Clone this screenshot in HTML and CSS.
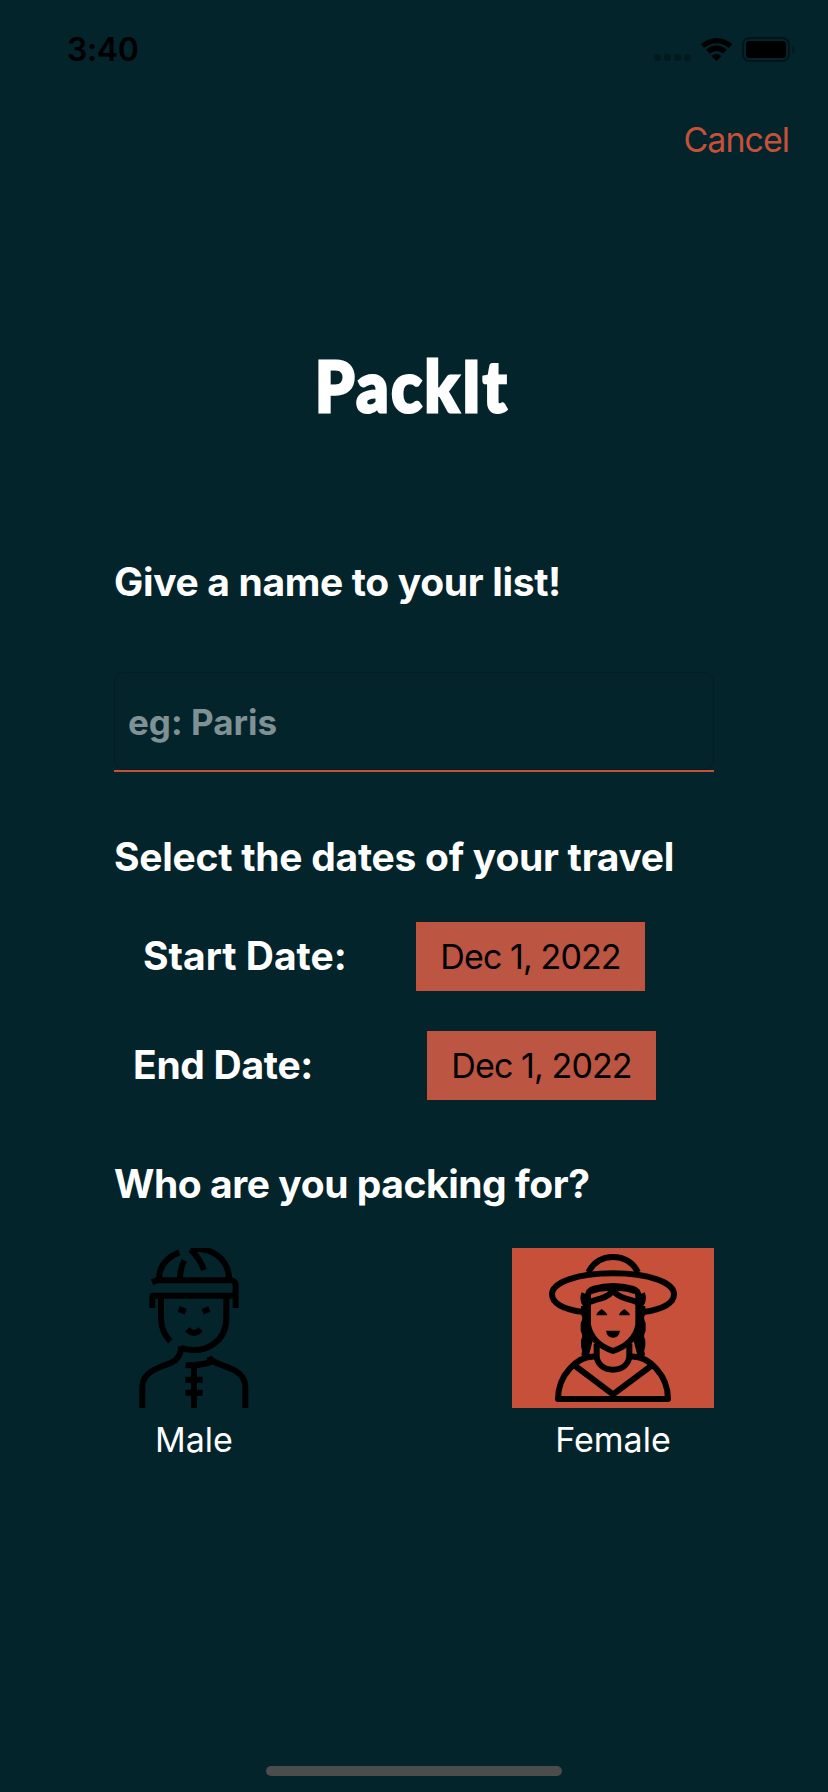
FILE: index.html
```html
<!DOCTYPE html>
<html lang="en">
<head>
<meta charset="utf-8">
<title>PackIt</title>
<link rel="stylesheet" href="styles.css">
</head>
<body>
<div class="screen">
  <header class="status">
    <span class="time">3:40</span>
    <svg class="indicators" viewBox="699 34 96 30" aria-hidden="true">
      <g class="faint"><rect x="653" y="54" width="7" height="7" rx="3"/><rect x="663" y="54" width="7" height="7" rx="3"/><rect x="673" y="54" width="7" height="7" rx="3"/><rect x="683" y="54" width="7" height="7" rx="3"/></g>
      <path d="M699.7 44.3a23 23 0 0 1 31.6 0l-3.6 3.8a17.5 17.5 0 0 0-24.4 0z"/>
      <path d="M705 49.8a15 15 0 0 1 21 0l-3.7 3.8a10 10 0 0 0-13.6 0z"/>
      <path d="M710.7 56a7 7 0 0 1 9.6 0l-4.8 5z"/>
      <rect class="case" x="742" y="38" width="46" height="23" rx="6.5"/>
      <rect x="745" y="41" width="40" height="17" rx="3.5"/>
      <path class="faint" d="M791 45.500q3 1 3 4t-3 4z"/>
    </svg>
  </header>
  <nav class="nav"><span class="cancel">Cancel</span></nav>
  <h1 class="title">PackIt</h1>
  <main class="form">
    <h2 class="heading name-heading">Give a name to your list!</h2>
    <div class="field"><div class="field-box"><span class="placeholder">eg: Paris</span></div></div>
    <h2 class="heading dates-heading">Select the dates of your travel</h2>
    <div class="date-row start"><span class="heading start-label">Start Date:</span><span class="date"><span class="date-pill">Dec 1, 2022</span></span></div>
    <div class="date-row end"><span class="heading end-label">End Date:</span><span class="date"><span class="date-pill">Dec 1, 2022</span></span></div>
    <h2 class="heading who-heading">Who are you packing for?</h2>
    <div class="people">
      <div class="person">
        <svg class="portrait male" viewBox="-18 54 480 480" aria-hidden="true">
          <g class="ink">
            <path d="M96 157L110 151H336Q347 153 347 166V234M97 234V197H347"/>
            <path d="M117 149C117 108 139 83 178 67M180 146Q180 116 193 91M212 59Q240 86 252 120M212 59C277 49 327 88 327 149"/>
            <path d="M123 202V266Q125 309 151 334M319 202V264C319 332 260 376 183 354"/>
            <path d="M183 349C183 408 130 398 95 424Q67 440 67 470V536M267 380C276 400 320 408 345 422Q376 440 376 470V536M197 405Q238 409 276 395"/>
            <path d="M222 407V536M196 449H248M196 488H248"/>
            <path d="M176 237L197 245M268 237L248 245M202 298Q222 320 242 298"/>
          </g>
        </svg>
        <span class="label male-label">Male</span>
      </div>
      <div class="person">
        <svg class="portrait female" viewBox="36 54 606 480" aria-hidden="true">
          <g class="ink">
            <path d="M250 246C187 239 156 218 156 193C156 157 231 130 339 130S522 157 522 193C522 218 491 239 429 246"/>
            <path d="M265 127C281 96 308 81 339 81S398 96 414 127"/>
            <path d="M264 330V199Q264 181 282 176Q339 160 397 176Q415 181 415 199V330"/>
            <path d="M253 190Q246 208 256 222Q267 215 303 205Q330 197 339 180Q349 197 376 205Q413 215 423 222Q433 208 426 190"/>
            <path d="M273 184Q307 170 339 176Q371 170 406 184"/>
            <path d="M252 228V251Q260 264 251 281V301Q260 317 252 332V348Q259 363 252 379M427 228V251Q419 264 428 281V301Q419 317 427 332V348Q420 363 427 379"/>
            <path d="M264 285Q275 341 339 363Q404 341 415 285M272 320L258 374M407 320L421 374"/>
            <path d="M290 341V376C290 402 311 419 339 419S388 402 388 376V341"/>
            <path d="M290 380C232 374 174 436 174 507H504C504 436 446 374 388 380M222 405L339 493L457 405"/>
          </g>
          <path d="M289 256Q290 247 305 237Q320 247 322 256zM357 256Q358 247 373 237Q388 247 390 256zM318 302H360Q357 323 339 323T318 302z"/>
        </svg>
        <span class="label female-label">Female</span>
      </div>
    </div>
  </main>
  <footer class="home"><div class="home-bar"></div></footer>
</div>
</body>
</html>
```
FILE: styles.css
```css
* { box-sizing: border-box; }
body { margin: 0; background: #03242b; }
.screen {
  width: 828px; height: 1792px; display: flex; flex-direction: column;
  background: #03242b; color: #fff; overflow: hidden;
  font-family: Inter, "Liberation Sans", sans-serif;
}
.status {
  height: 120px; padding: 30px 32px 0 67px;
  display: flex; justify-content: space-between; align-items: flex-start; color: #000;
}
.time { font-size: 32px; line-height: 40px; font-weight: 600; letter-spacing: -.4px; }
.indicators { width: 96px; height: 30px; margin-top: 4px; overflow: visible; }
.faint { opacity: .3; }
.case { fill: none; stroke: #000; stroke-opacity: .4; stroke-width: 2; }
.nav { height: 221px; display: flex; justify-content: flex-end; padding-right: 39px; }
.cancel { color: #c65039; font-size: 34px; line-height: 40px; letter-spacing: -1px; }
.title {
  margin: 0 0 0 315px; height: 216px; font: 900 71px/88px Lato, sans-serif;
  letter-spacing: 3px; -webkit-text-stroke: 3px #fff; stroke-linejoin: round;
  transform: scaleX(.89); transform-origin: left;
}
.form { width: 600px; margin-left: 114px; display: flex; flex-direction: column; }
.heading { margin: 0; font-size: 39px; line-height: 48px; font-weight: 700; letter-spacing: -.34px; white-space: nowrap; }
.dates-heading { letter-spacing: -.27px; }
.who-heading { letter-spacing: -.45px; }
.start-label { letter-spacing: 0; }
.end-label { letter-spacing: -.3px; }
.name-heading { position: relative; top: 1px; }
.field { margin: 67px 0 61px; height: 100px; border-bottom: 2px solid #c65039; }
.field-box {
  height: 98px; padding-left: 13px; display: flex; align-items: center;
  border: 1px solid #021e24; border-radius: 10px;
}
.placeholder { color: #7f9194; font-size: 35px; font-weight: 700; line-height: 42px; padding-top: 1px; }
.date-row { display: flex; justify-content: space-between; align-items: center; height: 69px; }
.date-row .heading { padding-bottom: 2px; }
.start { margin: 41px 69px 40px 29px; }
.end { margin: 0 58px 60px 19px; }
.date { width: 229px; height: 69px; background: #c65039; }
.date-pill {
  display: flex; justify-content: center; align-items: center; height: 69px; padding-bottom: 1px;
  border-radius: 12px; background: #bc5541; color: #000; font-size: 34px; letter-spacing: -.9px; white-space: nowrap;
}
.people { display: flex; justify-content: space-between; margin-top: 40px; }
.person { display: flex; flex-direction: column; align-items: center; gap: 12px; }
.portrait { display: block; height: 160px; }
.male { width: 160px; }
.female { width: 202px; background: #c65039; }
.ink { fill: none; stroke: #000; stroke-width: 18; stroke-linejoin: round; }
.label { font-size: 34px; line-height: 40px; }
.home { margin-top: auto; height: 26px; display: flex; justify-content: center; }
.home-bar { width: 296px; height: 10px; border-radius: 5px; background: #4c4c4c; }
```
